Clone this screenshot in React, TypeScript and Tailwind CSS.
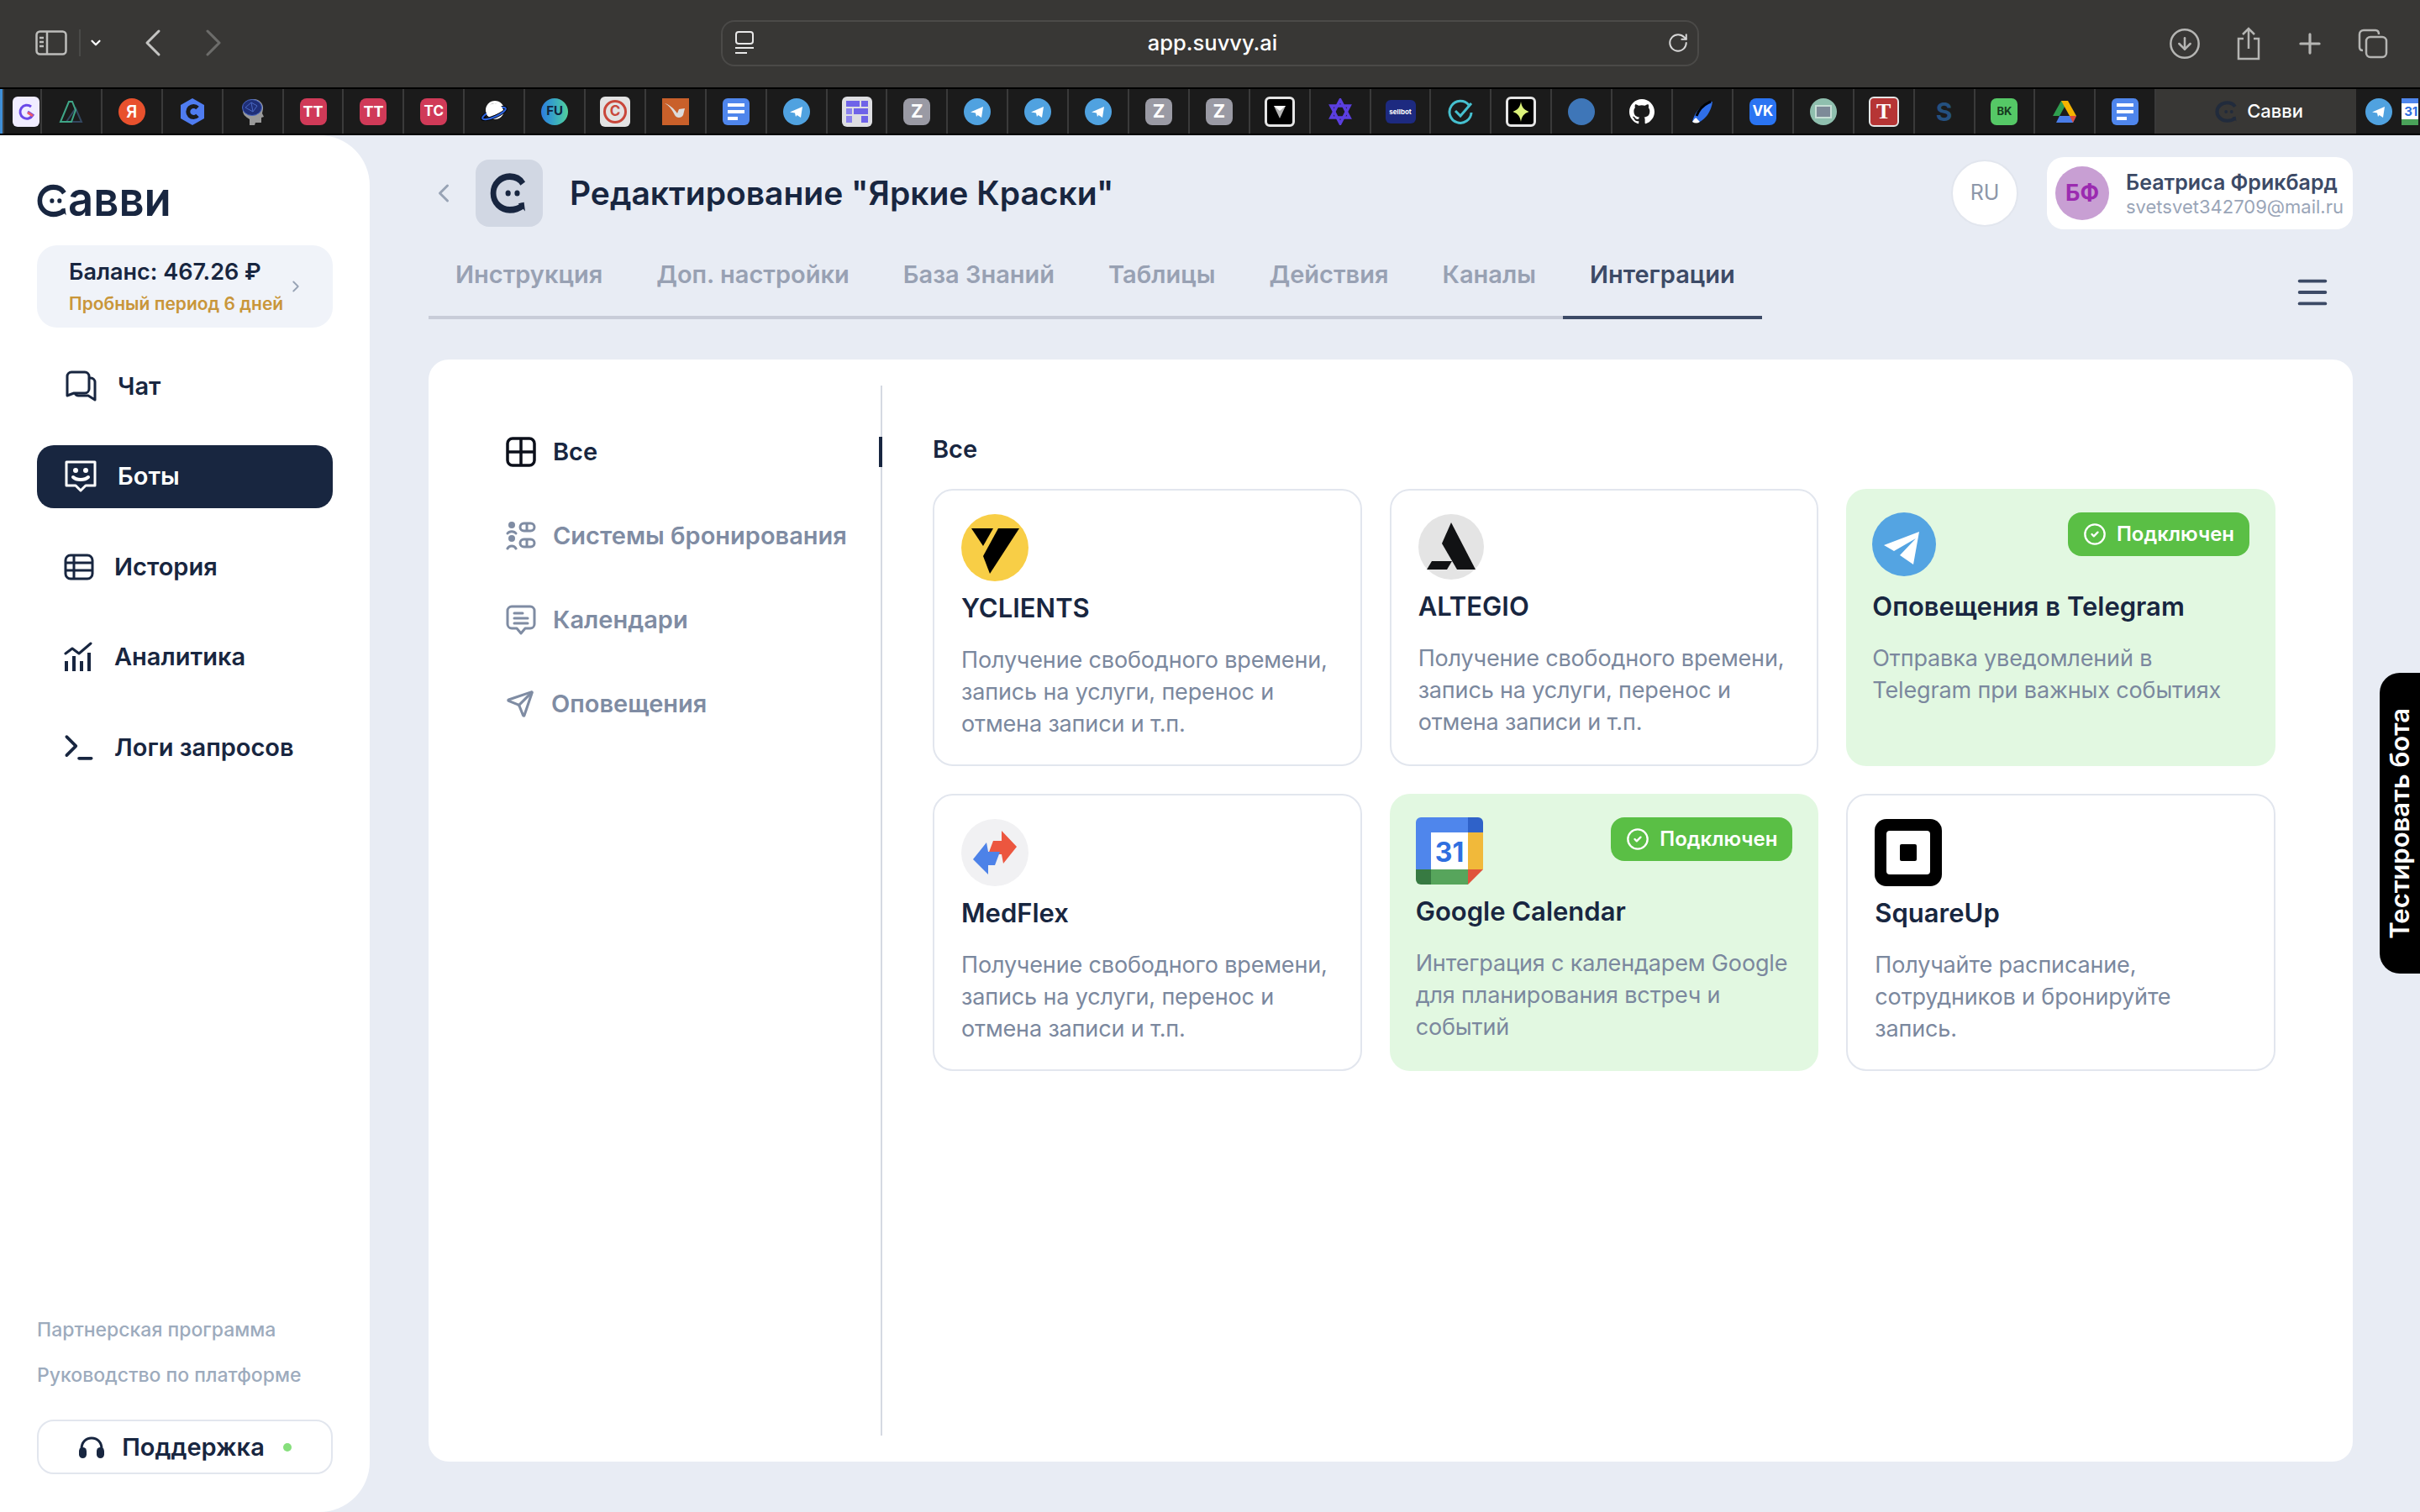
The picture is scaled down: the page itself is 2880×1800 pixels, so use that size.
import { ChevronDown, ChevronLeft, ChevronRight, CircleArrowDown, CircleCheck, Menu, Plus, RotateCw, Send, Terminal } from 'lucide-react';
import type { ReactNode } from 'react';

const font = { fontFamily: 'Inter, "Liberation Sans", sans-serif' };

function Letter({ bg, children, size = 'text-[18px]' }: { bg: string; children: ReactNode; size?: string }) {
  return <div className={`w-8 h-8 rounded-[8px] flex items-center justify-center font-bold text-white ${bg} ${size}`}>{children}</div>;
}

function Disc({ bg, children }: { bg: string; children?: ReactNode }) {
  return <div className={`w-8 h-8 rounded-full flex items-center justify-center text-white ${bg}`}>{children}</div>;
}

function TgDisc() {
  return (
    <Disc bg="bg-[#50a2e0]">
      <svg viewBox="0 0 24 24" className="w-6 h-6" fill="#fff"><path d="M4 12.5 19 6l-2 13-4.5-3-1.5 2-1-4.5z" /></svg>
    </Disc>
  );
}

function DocIcon() {
  return (
    <div className="w-8 h-8 rounded-[6px] bg-[#4f86ec] flex flex-col items-center justify-center gap-[4px]">
      <div className="w-5 h-[4px] bg-white" />
      <div className="w-5 h-[4px] bg-white" />
      <div className="w-3 h-[4px] bg-white self-start ml-[6px]" />
    </div>
  );
}

// favicons in the pinned tab strip, left to right
const favicons: ReactNode[] = [
  <svg viewBox="0 0 32 32" className="w-8 h-8" fill="none" strokeWidth="2"><path d="M21 12 28 28H10z" stroke="#33475f" /><path d="M13 4 3 28h13L21 14 17 4z" stroke="#3fa687" /></svg>,
  <Disc bg="bg-[#e8512d]"><span className="text-[20px] font-semibold">Я</span></Disc>,
  <svg viewBox="0 0 32 32" className="w-8 h-8"><path d="M16 0 30 8v16l-14 8-14-8V8z" fill="#4f7cf0" /><path d="M22 11.500a6.500 6.500 0 1 0 0 9" fill="none" stroke="#1b1b1b" strokeWidth="5" /></svg>,
  <svg viewBox="0 0 32 32" className="w-8 h-8"><path d="M4 15C4 6 10 1 17 1s12 6 11 12l-1 5 2 4-3 1v6h-7l-1 3H12v-7c-5-3-8-6-8-10z" fill="#9a9a9a" /><ellipse cx="15" cy="11" rx="11.500" ry="9.500" fill="#1f2f78" stroke="#4a68c2" /><path d="m7 11 7-6 7 4-5 7zM14 5l2 11" stroke="#4a68c2" fill="none" /></svg>,
  <Letter bg="bg-[#d03a58]">TT</Letter>,
  <Letter bg="bg-[#d03a58]">TT</Letter>,
  <Letter bg="bg-[#d03a58]" size="text-[17px]">TC</Letter>,
  <svg viewBox="0 0 32 32" className="w-8 h-8"><circle cx="17" cy="14" r="11" fill="#fff" /><path d="M12 8c4-2 8-1 10 2M16 14c3 1 6 0 8-2" stroke="#222" strokeWidth="1.500" fill="none" /><ellipse cx="16" cy="18" rx="15" ry="4" transform="rotate(-24 16 18)" fill="none" stroke="#000" strokeWidth="4" /><ellipse cx="16" cy="18" rx="15" ry="4" transform="rotate(-24 16 18)" fill="none" stroke="#2c62db" strokeWidth="2.200" /><path d="M9 9a11 11 0 0 1 18 5c-6 4-12 7-19 7a11 11 0 0 1 1-12z" fill="#fff" /></svg>,
  <div className="w-8 h-8 rounded-full bg-gradient-to-r from-[#2f7be0] to-[#53d09a] flex items-center justify-center text-[15px] font-bold text-[#10243f]">FU</div>,
  <div className="w-9 h-9 rounded-[6px] bg-[#e3e3e3] flex items-center justify-center">
    <div className="w-7 h-7 rounded-full border-[3px] border-[#c9473a] flex items-center justify-center text-[17px] font-bold text-[#c9473a]">C</div>
  </div>,
  <svg viewBox="0 0 32 32" className="w-8 h-8"><rect width="32" height="32" fill="#c9602a" /><path d="M3 6c5 2 9 8 12 14 2 4 8 4 10 0l2-8-7 1-2 5C14 12 8 7 3 6z" fill="#dcdcdc" /></svg>,
  <DocIcon />,
  <TgDisc />,
  <div className="w-9 h-9 rounded-[6px] bg-[#dedee2] p-[5px] grid grid-cols-3 gap-[2px]">
    <div className="col-span-2 bg-[#6f63e8]" /><div className="bg-[#6f63e8]" />
    <div className="bg-[#8b82ee]" /><div className="col-span-2 bg-[#6f63e8]" />
    <div className="bg-[#8b82ee]" /><div className="bg-[#dedee2]" /><div className="bg-[#6f63e8]" />
  </div>,
  <Letter bg="bg-[#9a9aa4]" size="text-[22px]">Z</Letter>,
  <TgDisc />,
  <TgDisc />,
  <TgDisc />,
  <Letter bg="bg-[#9a9aa4]" size="text-[22px]">Z</Letter>,
  <Letter bg="bg-[#9a9aa4]" size="text-[22px]">Z</Letter>,
  <div className="w-9 h-9 rounded-[6px] bg-black border-[3px] border-[#e5e5e5] flex items-center justify-center">
    <svg viewBox="0 0 20 20" className="w-5 h-5"><path d="M3 3h14l-7 15z" fill="#b5b5b5" /><path d="M3 3h14l-7 6z" fill="#fff" /></svg>
  </div>,
  <svg viewBox="0 0 32 32" className="w-8 h-8" fill="none" stroke="#5b3fe0" strokeWidth="3.500"><path d="M16 2 27 23H5z" /><path d="M16 30 5 9h22z" stroke="#fff" strokeWidth="1.500" /><path d="M16 30 5 9h22z" /></svg>,
  <div className="w-9 h-7 rounded-[6px] bg-[#1d2a80] flex items-center justify-center text-[8px] font-bold text-white">sellbot</div>,
  <svg viewBox="0 0 32 32" className="w-8 h-8" fill="none" stroke="#46c0cf" strokeWidth="3"><path d="M26 8a13 13 0 1 0 3 9" /><path d="m10 15 6 6 13-15" /></svg>,
  <div className="w-9 h-9 rounded-[6px] bg-black border-[3px] border-[#e5e5e5] flex items-center justify-center">
    <svg viewBox="0 0 20 20" className="w-6 h-6"><path d="M10 0c1 6 3 8 8 10-5 2-7 4-8 10-1-6-3-8-8-10 5-2 7-4 8-10z" fill="#dcf27a" /></svg>
  </div>,
  <Disc bg="bg-[#3e76b8]" />,
  <svg viewBox="0 0 24 24" className="w-9 h-9" fill="#fff"><path d="M12 2C6.500 2 2 6.500 2 12c0 4.400 2.900 8.200 6.800 9.500.5.100.7-.2.700-.5v-1.700c-2.800.6-3.400-1.300-3.400-1.300-.5-1.200-1.100-1.500-1.100-1.500-.9-.6.100-.6.100-.6 1 .1 1.500 1 1.500 1 .9 1.500 2.300 1.100 2.900.8.100-.6.300-1.100.6-1.300-2.200-.3-4.500-1.100-4.500-4.900 0-1.100.4-2 1-2.700-.1-.3-.4-1.300.1-2.600 0 0 .8-.3 2.700 1a9.400 9.400 0 0 1 5 0c1.900-1.300 2.700-1 2.700-1 .5 1.300.2 2.300.1 2.600.6.700 1 1.600 1 2.700 0 3.800-2.300 4.600-4.500 4.900.4.300.7.900.7 1.900V21c0 .3.200.6.700.5C19.100 20.200 22 16.400 22 12c0-5.500-4.500-10-10-10z" /></svg>,
  <svg viewBox="0 0 32 32" className="w-8 h-8"><path d="M4 28c2-10 10-22 24-24-1 10-8 22-18 25z" fill="#2f6fea" /><path d="M4 28c3-4 4-6 6-3l3 3c-3 2-6 2-9 0z" fill="#fff" /><path d="M26 4c-8 3-14 9-17 17" stroke="#000" strokeWidth="3" fill="none" /></svg>,
  <div className="w-8 h-8 rounded-[8px] bg-[#2a74f2] flex items-center justify-center text-[17px] font-bold text-white">VK</div>,
  <div className="w-8 h-8 rounded-full bg-[#8fbfae] flex items-center justify-center"><div className="w-5 h-4 bg-[#7d8a98] border-2 border-[#c6ded5]" /></div>,
  <div className="w-9 h-9 rounded-[6px] bg-[#b63535] border-2 border-[#e5e5e5] flex items-center justify-center text-[26px] font-bold text-white" style={{ fontFamily: '"Liberation Serif", serif' }}>T</div>,
  <span className="text-[30px] leading-none font-bold text-[#24507f]">S</span>,
  <div className="w-8 h-8 rounded-[7px] bg-[#55c866] flex items-center justify-center text-[13px] font-bold text-[#163a1e]">BK</div>,
  <svg viewBox="0 0 32 32" className="w-8 h-8"><path d="M12 3h8L10 21H2z" fill="#2f9e4f" /><path d="M20 3l10 18h-8L12 3z" fill="#f5b400" /><path d="M10 21h20l-4 8H6z" fill="#4a7de8" /><path d="M22 21h8l-4 8z" fill="#e04a3a" /></svg>,
  <DocIcon />,
];

function LogoMark({ className, dots = '#182640' }: { className: string; dots?: string }) {
  return (
    <svg viewBox="0 0 34 34" className={className} fill="none" preserveAspectRatio="none">
      <path d="M29 9.500C27 6.500 23 4 17.500 4 9.500 4 3 9.500 3 17s6.500 13 14.500 13c4 0 8-1 11.500-3.500" stroke="#182640" strokeWidth="5" />
      <path d="M25 25l6 6-1-7z" fill="#182640" />
      <circle cx="16" cy="17" r="2.300" fill={dots} />
      <circle cx="24" cy="17" r="2.300" fill={dots} />
    </svg>
  );
}

function BrowserBar() {
  return (
    <div className="h-[104px] bg-[#383735] flex items-center text-[#c4c4c2] relative">
      <div className="w-[858px] flex items-center pl-[42px] pb-[2px]">
        <svg viewBox="0 0 38 30" className="w-[38px] h-[30px]" fill="none" stroke="#bdbdbb" strokeWidth="2.500">
          <rect x="1.500" y="1.500" width="35" height="27" rx="4" />
          <path d="M14 2v26M5 9h5M5 14h5M5 19h5" />
        </svg>
        <div className="w-[2px] h-[32px] bg-[#4a4a48] ml-[14px]" />
        <ChevronDown className="w-[18px] h-[18px] ml-[9px] text-white" strokeWidth={3} />
        <ChevronLeft className="w-[56px] h-[56px] ml-[31px] text-[#c4c4c2]" strokeWidth={1.300} />
        <ChevronRight className="w-[56px] h-[56px] ml-[16px] text-[#6c6c6a]" strokeWidth={1.300} />
      </div>
      <div className="w-[1164px] h-[55px] border-2 border-[#4b4a48] rounded-[16px] flex items-center justify-between pl-[14px] pr-[10px] mb-[2px]">
        <svg viewBox="0 0 24 28" className="w-[24px] h-[28px]" fill="none" stroke="#e8e8e8" strokeWidth="2">
          <rect x="2" y="1" width="20" height="14" rx="3" />
          <path d="M1 20h22M1 26h14" />
        </svg>
        <span className="text-[25.500px] font-medium text-white ml-[4px]">app.suvvy.ai</span>
        <RotateCw className="w-[26px] h-[26px] text-[#d8d8d8]" strokeWidth={1.800} />
      </div>
      <div className="flex-1 flex items-center justify-end pr-[38px] gap-[38px]">
        <CircleArrowDown className="w-[40px] h-[40px] mr-[2px] text-[#b5b5b3]" strokeWidth={1.500} />
        <svg viewBox="0 0 32 40" className="w-[32px] h-[40px]" fill="none" stroke="#b5b5b3" strokeWidth="2.500">
          <path d="M10 14H4v24h24V14h-6M16 26V2M9 9l7-7 7 7" />
        </svg>
        <Plus className="w-[38px] h-[38px] text-[#b5b5b3]" strokeWidth={2} />
        <svg viewBox="0 0 36 36" className="w-[36px] h-[36px]" fill="none" stroke="#b5b5b3" strokeWidth="2.500">
          <rect x="10" y="10" width="24" height="24" rx="5" />
          <path d="M6 26c-3 0-4-2-4-4V7c0-3 2-5 5-5h14c3 0 4 2 4 5" />
        </svg>
      </div>
    </div>
  );
}

function TabStrip() {
  return (
    <div className="h-[57px] bg-[#1b1b1b] border-t-2 border-b-2 border-black flex overflow-hidden">
      <div className="w-[5px] bg-[#3f8fd8] border-r-2 border-[#3a3a3a] shrink-0" />
      <div className="w-[45px] shrink-0 flex items-center justify-end pr-[1px] border-r-2 border-[#3a3a3a]">
        <div className="w-[32px] h-[36px] rounded-[6px] bg-[#f0ecff] flex items-center justify-center">
          <svg viewBox="0 0 24 24" className="w-6 h-6" fill="none" stroke="#6a48e8" strokeWidth="3">
            <path d="M18 6a8 8 0 1 0 2 10l-6-4" />
            <path d="m14 13 6 4" stroke="#ee5a6a" />
          </svg>
        </div>
      </div>
      {favicons.map((icon, i) => (
        <div key={i} className="w-[71.9px] shrink-0 flex items-center justify-center border-r-2 border-[#3a3a3a]">
          {icon}
        </div>
      ))}
      <div className="w-[238px] shrink-0 bg-[#383735] -my-[2px] flex items-center pl-[70px] gap-[10px]">
        <LogoMark className="w-[28px] h-[28px] opacity-70" />
        <span className="text-[22px] font-medium text-white">Савви</span>
      </div>
      <div className="w-[54px] shrink-0 flex items-center justify-center"><TgDisc /></div>
      <div className="shrink-0 w-[20px] h-8 self-center bg-white overflow-hidden flex flex-col">
        <div className="h-[6px] bg-[#4f86ec]" />
        <div className="flex-1 text-[#2f6fe0] text-[15px] leading-[19px] font-bold whitespace-nowrap pl-[3px]">31</div>
        <div className="h-[7px] bg-[#4aa35a]" />
      </div>
    </div>
  );
}

function ChatIcon() {
  return (
    <svg viewBox="0 0 38 38" className="w-[38px] h-[38px]" fill="none" stroke="#182640" strokeWidth="3" strokeLinejoin="round">
      <path d="M8 2h16a5 5 0 0 1 5 5v15a5 5 0 0 1-5 5H11l-8 3V7a5 5 0 0 1 5-5z" />
      <path d="M29 9h2a5 5 0 0 1 5 5v21l-8-5H17a5 5 0 0 1-5-3" />
    </svg>
  );
}

function BotIcon({ color }: { color: string }) {
  return (
    <svg viewBox="0 0 38 38" className="w-[38px] h-[38px]" fill="none" stroke={color} strokeWidth="3">
      <path d="M2 2h34v28H25l-6 6-6-6H2z" strokeLinejoin="round" />
      <circle cx="13" cy="12" r="3" fill={color} stroke="none" />
      <circle cx="25" cy="12" r="3" fill={color} stroke="none" />
      <path d="M10 20c4 4 14 4 18 0" strokeLinecap="round" strokeWidth="4" />
    </svg>
  );
}

function TableIcon() {
  return (
    <svg viewBox="0 0 36 32" className="w-[36px] h-[32px]" fill="none" stroke="#182640" strokeWidth="3">
      <rect x="2" y="2" width="32" height="28" rx="6" />
      <path d="M2 11h32M2 20h32M12 2v28" />
    </svg>
  );
}

function ChartIcon() {
  return (
    <svg viewBox="0 0 34 38" className="w-[34px] h-[38px]" fill="none" stroke="#182640">
      <path d="M2 15 10 9l8 6L32 3" strokeWidth="3" strokeLinecap="round" strokeLinejoin="round" />
      <path d="M3 24v12M12 18v18M21 24v12M30 14v22" strokeWidth="4" />
    </svg>
  );
}

const navItems = [
  { label: 'Чат', icon: <ChatIcon />, gap: 'gap-[25px]', ml: 'pl-[33px]' },
  { label: 'Боты', icon: <BotIcon color="#fff" />, gap: 'gap-[25px]', ml: 'pl-[33px]', active: true },
  { label: 'История', icon: <TableIcon />, gap: 'gap-[24px]', ml: 'pl-[32px]' },
  { label: 'Аналитика', icon: <ChartIcon />, gap: 'gap-[26px]', ml: 'pl-[32px]' },
  { label: 'Логи запросов', icon: <Terminal className="w-[44px] h-[44px] text-[#182640] -ml-[3px]" strokeWidth={2} />, gap: 'gap-[20px]', ml: 'pl-[31px]' },
];

function Sidebar() {
  return (
    <aside className="w-[440px] shrink-0 bg-white rounded-r-[60px] px-[44px] flex flex-col">
      <div className="mt-[57px] h-[42px] flex items-end">
        <LogoMark className="w-[38px] h-[42px]" />
        <span className="text-[56px] leading-[42px] font-semibold text-[#182640] origin-left scale-x-[0.94] -ml-[1px] pb-[2px]">авви</span>
      </div>
      <div className="mt-[32px] h-[98px] rounded-[24px] bg-[#f0f3f9] pl-[38px] pr-[33px] flex items-center justify-between">
        <div>
          <div className="text-[27px] leading-[36px] font-semibold text-[#182640]">Баланс: 467.26 ₽</div>
          <div className="mt-[6px] text-[21px] leading-[28px] font-semibold text-[#c9963a] whitespace-nowrap">Пробный период 6 дней</div>
        </div>
        <ChevronRight className="w-[22px] h-[22px] text-[#98a3b5] shrink-0" />
      </div>
      <nav className="mt-[32px] flex flex-col gap-[32.500px]">
        {navItems.map(item => (
          <div
            key={item.label}
            className={`h-[75px] rounded-[20px] flex items-center ${item.ml} ${item.gap} text-[29px] font-semibold ${item.active ? 'bg-[#182640] text-white' : 'text-[#182640]'}`}
          >
            {item.icon}
            <span>{item.label}</span>
          </div>
        ))}
      </nav>
      <div className="mt-auto text-[23px] leading-[32px] font-medium text-[#9dabbd] whitespace-nowrap">Партнерская программа</div>
      <div className="mt-[22px] text-[23px] leading-[32px] font-medium text-[#9dabbd] whitespace-nowrap">Руководство по платформе</div>
      <div className="mt-[37px] mb-[45px] h-[65px] border-2 border-[#e2e6ee] rounded-[20px] flex items-center justify-center text-[29px] font-semibold text-[#182640]">
        <svg viewBox="0 0 32 28" className="w-[32px] h-[28px]" fill="#182640">
          <path d="M4 16C4 8 9 3 16 3s12 5 12 13" fill="none" stroke="#182640" strokeWidth="3" />
          <rect x="1" y="14" width="9" height="13" rx="4.500" />
          <rect x="22" y="14" width="9" height="13" rx="4.500" />
        </svg>
        <span className="ml-[20px]">Поддержка</span>
        <div className="w-[10px] h-[10px] rounded-full bg-[#86df7c] ml-[22px]" />
      </div>
    </aside>
  );
}

const tabs = ['Инструкция', 'Доп. настройки', 'База Знаний', 'Таблицы', 'Действия', 'Каналы', 'Интеграции'];

function Header() {
  return (
    <>
      <div className="h-[86px] flex items-center">
        <ChevronLeft className="w-[36px] h-[36px] text-[#98a3b5] mr-[20px]" strokeWidth={2} />
        <div className="w-[80px] h-[80px] rounded-[16px] bg-[#d1d7e3] flex items-center justify-center">
          <LogoMark className="w-[46px] h-[52px]" />
        </div>
        <h1 className="ml-[32px] text-[39px] font-semibold text-[#182640] whitespace-nowrap">Редактирование &quot;Яркие Краски&quot;</h1>
        <div className="ml-auto w-[80px] h-[80px] rounded-full bg-white border-2 border-[#e2e6ee] flex items-center justify-center text-[25px] text-[#8d97a9]">RU</div>
        <div className="ml-[34px] w-[364px] h-[86px] rounded-[20px] bg-white flex items-center pl-[10px]">
          <div className="w-[64px] h-[64px] rounded-full bg-[#c89fd3] flex items-center justify-center text-[27px] font-bold text-[#9b2bb0]">БФ</div>
          <div className="ml-[20px]">
            <div className="text-[25px] leading-[32px] font-semibold text-[#3c4a66] whitespace-nowrap">Беатриса Фрикбард</div>
            <div className="text-[22px] leading-[26px] text-[#9aa5b8] whitespace-nowrap">svetsvet342709@mail.ru</div>
          </div>
        </div>
      </div>
      <div className="mt-[34px] flex items-start justify-between">
        <div className="flex border-b-4 border-[#c8ccd8]">
          {tabs.map(tab => (
            <div
              key={tab}
              className={`px-[32px] pb-[29px] -mb-[4px] border-b-4 text-[29px] leading-[40px] font-semibold whitespace-nowrap ${tab === 'Интеграции' ? 'border-[#3c4a66] text-[#3c4a66]' : 'border-transparent text-[#98a1b3]'}`}
            >
              {tab}
            </div>
          ))}
        </div>
        <Menu className="w-[46px] h-[46px] text-[#3c4a66] mt-[18px] mr-[25px]" strokeWidth={2} />
      </div>
    </>
  );
}

const categories = [
  {
    label: 'Все',
    active: true,
    icon: (
      <svg viewBox="0 0 36 36" className="w-[36px] h-[36px]" fill="none" stroke="#0b0f1a" strokeWidth="3.500">
        <rect x="2" y="2" width="32" height="32" rx="6" />
        <path d="M18 2v32M2 18h32" />
      </svg>
    ),
  },
  {
    label: 'Системы бронирования',
    icon: (
      <svg viewBox="0 0 36 36" className="w-[36px] h-[36px]" fill="none" stroke="#7f8ca3" strokeWidth="3">
        <circle cx="7" cy="5" r="4" fill="#7f8ca3" stroke="none" />
        <circle cx="7" cy="21" r="4" fill="#7f8ca3" stroke="none" />
        <path d="M2 15c2-3 8-3 10 0M2 33c2-4 8-4 10 0" strokeLinecap="round" />
        <rect x="17" y="3" width="17" height="9" rx="4.500" />
        <rect x="17" y="22" width="17" height="9" rx="4.500" />
        <path d="M25 3v9M25 22v9" />
      </svg>
    ),
  },
  {
    label: 'Календари',
    icon: (
      <svg viewBox="0 0 36 36" className="w-[36px] h-[36px]" fill="none" stroke="#7f8ca3" strokeWidth="3">
        <path d="M7 2h22a5 5 0 0 1 5 5v16a5 5 0 0 1-5 5h-6l-5 6-5-6H7a5 5 0 0 1-5-5V7a5 5 0 0 1 5-5z" strokeLinejoin="round" />
        <path d="M10 10h10M10 16h16M10 22h16" strokeLinecap="round" />
      </svg>
    ),
  },
  {
    label: 'Оповещения',
    icon: <Send className="w-[34px] h-[34px] text-[#7f8ca3]" strokeWidth={2.200} />,
  },
];

function Badge() {
  return (
    <div className="w-[216px] h-[52px] rounded-[16px] bg-[#5abf45] flex items-center justify-center gap-[12px] text-[24px] font-semibold text-white">
      <CircleCheck className="w-[28px] h-[28px]" strokeWidth={2} />
      Подключен
    </div>
  );
}

function YclientsIcon() {
  return (
    <svg viewBox="0 0 80 80" className="w-[80px] h-[80px]">
      <circle cx="40" cy="40" r="40" fill="#f8ce46" />
      <path d="M12 17h26L26 38z" fill="#000" />
      <path d="M44 17h25L34 71 26 50z" fill="#000" />
    </svg>
  );
}

function AltegioIcon() {
  return (
    <svg viewBox="0 0 78 78" className="w-[78px] h-[78px]">
      <circle cx="39" cy="39" r="39" fill="#e4e4e4" />
      <path d="M39 10 68 66H46L28 35z" fill="#111214" />
      <path d="M16 56h24l-6 10H10z" fill="#111214" />
    </svg>
  );
}

function TelegramIcon() {
  return (
    <svg viewBox="0 0 76 76" className="w-[76px] h-[76px]">
      <circle cx="38" cy="38" r="38" fill="#54a4e2" />
      <path d="M14 39 56 23l-7 39-16-11 19-20-26 15z" fill="#fff" />
    </svg>
  );
}

function MedflexIcon() {
  return (
    <svg viewBox="0 0 80 80" className="w-[80px] h-[80px]">
      <circle cx="40" cy="40" r="40" fill="#f1f1f3" />
      <path d="M48 14l18 19-16 20-2-11H32l6-16h10z" fill="#ec563f" />
      <path d="M32 66 14 48l16-20 2 11h14l-6 16h-8z" fill="#4d82e8" />
    </svg>
  );
}

function CalendarIcon() {
  return (
    <svg viewBox="0 0 80 80" className="w-[80px] h-[80px]">
      <path d="M6 0h58v18H18v44H0V6a6 6 0 0 1 6-6z" fill="#4f86ec" />
      <path d="M62 0h12a6 6 0 0 1 6 6v12H62z" fill="#2f62c9" />
      <rect x="18" y="18" width="44" height="44" fill="#fff" />
      <rect x="62" y="18" width="18" height="44" fill="#f1b93a" />
      <path d="M18 62h44v18H18z" fill="#57a55c" />
      <path d="M0 62h18v18H6a6 6 0 0 1-6-6z" fill="#377a42" />
      <path d="M62 62h18L62 80z" fill="#e0533c" />
      <text x="40" y="53" textAnchor="middle" fontSize="32" fontWeight="700" fill="#2f6fe0" fontFamily="Inter, sans-serif">31</text>
    </svg>
  );
}

function SquareIcon() {
  return (
    <div className="w-[80px] h-[80px] rounded-[14px] bg-black flex items-center justify-center">
      <div className="w-[52px] h-[52px] rounded-[4px] bg-white flex items-center justify-center">
        <div className="w-[20px] h-[20px] bg-black rounded-[2px]" />
      </div>
    </div>
  );
}

const cards = [
  { title: 'YCLIENTS', icon: <YclientsIcon />, lines: ['Получение свободного времени,', 'запись на услуги, перенос и', 'отмена записи и т.п.'] },
  { title: 'ALTEGIO', icon: <AltegioIcon />, iconBox: 'h-[78px]', lines: ['Получение свободного времени,', 'запись на услуги, перенос и', 'отмена записи и т.п.'] },
  { title: 'Оповещения в Telegram', icon: <TelegramIcon />, connected: true, lines: ['Отправка уведомлений в', 'Telegram при важных событиях'] },
  { title: 'MedFlex', icon: <MedflexIcon />, lines: ['Получение свободного времени,', 'запись на услуги, перенос и', 'отмена записи и т.п.'] },
  { title: 'Google Calendar', icon: <CalendarIcon />, connected: true, lines: ['Интеграция с календарем Google', 'для планирования встреч и', 'событий'] },
  { title: 'SquareUp', icon: <SquareIcon />, lines: ['Получайте расписание,', 'сотрудников и бронируйте', 'запись.'] },
];

function IntegrationCard({ card }: { card: (typeof cards)[number] }) {
  return (
    <div className={`h-[330px] rounded-[24px] py-[28px] ${card.connected ? 'bg-[#e2f8e1] px-[31px]' : 'bg-white border-2 border-[#e2e6ee] px-[32px]'}`}>
      <div className={`flex justify-between items-start ${card.iconBox ?? 'h-[80px]'}`}>
        {card.icon}
        {card.connected && <Badge />}
      </div>
      <div className="mt-[12px] text-[31px] leading-[40px] font-semibold text-[#182640] whitespace-nowrap">{card.title}</div>
      <div className="mt-[23px] text-[27px] leading-[38px] text-[#7b889e] tracking-[-0.15px]">
        {card.lines.map(line => (
          <div key={line} className="whitespace-nowrap">{line}</div>
        ))}
      </div>
    </div>
  );
}

export default function App() {
  return (
    <div className="w-[2880px] h-[1800px] bg-[#e8ecf4] flex flex-col relative overflow-hidden" style={font}>
      <BrowserBar />
      <TabStrip />
      <div className="flex-1 flex min-h-0">
        <Sidebar />
        <main className="flex-1 min-w-0 pl-[70px] pr-[80px] pt-[26px] flex flex-col">
          <Header />
          <section className="mt-[48px] h-[1312px] bg-white rounded-[24px] py-[31px] flex">
            <div className="w-[540px] shrink-0 border-r-2 border-[#d5d9e2] pl-[92px] pt-[59px] flex flex-col gap-[60px] relative">
              {categories.map(cat => (
                <div
                  key={cat.label}
                  className={`h-[40px] flex items-center gap-[20px] text-[29px] whitespace-nowrap font-semibold ${cat.active ? 'text-[#182640]' : 'text-[#7f8ca3]'}`}
                >
                  {cat.icon}
                  {cat.label}
                </div>
              ))}
              <div className="absolute right-[-2px] top-[61px] w-[4px] h-[36px] bg-[#182640]" />
            </div>
            <div className="flex-1 pl-[60px] pr-[92px]">
              <div className="mt-[56px] h-[40px] flex items-center text-[29px] font-semibold text-[#182640]">Все</div>
              <div className="mt-[27px] grid grid-cols-3 gap-[33px]">
                {cards.map(card => (
                  <IntegrationCard key={card.title} card={card} />
                ))}
              </div>
            </div>
          </section>
        </main>
      </div>
      <div className="absolute right-0 top-[801px] w-[48px] h-[358px] rounded-l-[24px] bg-black flex items-center justify-center">
        <span className="[writing-mode:vertical-rl] rotate-180 text-[31px] font-semibold text-white whitespace-nowrap">Тестировать бота</span>
      </div>
    </div>
  );
}
